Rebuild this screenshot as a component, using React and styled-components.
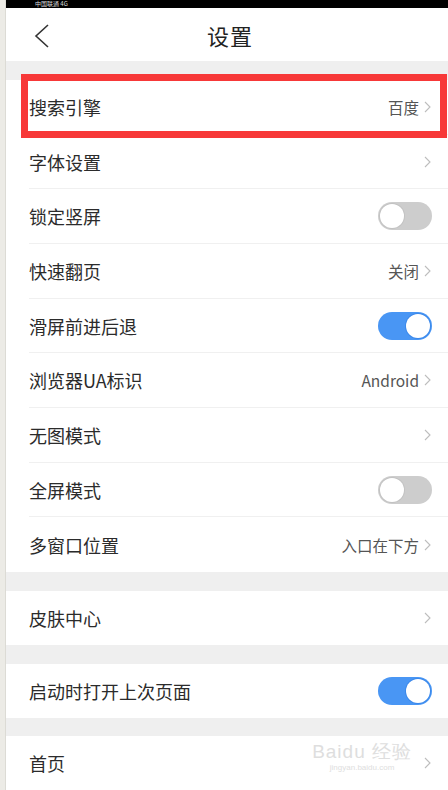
import React, { useState } from "react";
import styled, { createGlobalStyle } from "styled-components";

const GlobalStyle = createGlobalStyle`
  html, body {
    margin: 0;
    padding: 0;
    background: #ffffff;
  }
  body {
    font-family: "Noto Sans CJK SC", "Noto Sans", "Liberation Sans", sans-serif;
    overflow: hidden;
  }
`;

const Page = styled.div`
  display: flex;
  width: 448px;
  height: 790px;
  overflow: hidden;
`;

const LeftStrip = styled.div`
  width: 6px;
  flex-shrink: 0;
  background: #ecebe6;
  border-right: 1px solid #dcdbd5;
  box-sizing: border-box;
`;

const Main = styled.div`
  flex: 1;
  display: flex;
  flex-direction: column;
  background: #efefef;
`;

const StatusBar = styled.div`
  height: 8px;
  background: #000;
  color: #ddd;
  font-size: 6px;
  line-height: 8px;
  padding-left: 29px;
  white-space: nowrap;
`;

const Header = styled.div`
  height: 54px;
  background: #fff;
  display: flex;
  align-items: center;
  justify-content: center;
  padding-left: 6px;
  position: relative;
`;

const BackButton = styled.button`
  position: absolute;
  left: 24px;
  top: 15px;
  width: 24px;
  height: 26px;
  padding: 0;
  border: 0;
  background: none;
  display: flex;
  align-items: center;
  justify-content: center;
`;

const Title = styled.h1`
  margin: 0;
  font-size: 22px;
  font-weight: 400;
  color: #222;
  letter-spacing: 1px;
`;

const Band = styled.div`
  height: ${p => p.$h || 19}px;
  flex-shrink: 0;
`;

const Group = styled.div`
  background: #fff;
  padding-left: 23px;
`;

const Row = styled.div`
  position: relative;
  height: ${p => p.$h || 54}px;
  display: flex;
  align-items: center;
  justify-content: space-between;
  padding-right: 17px;
  box-sizing: border-box;
  border-bottom: ${p => (p.$last ? "none" : "1px solid #f0f0f0")};
`;

const Label = styled.span`
  font-size: 18px;
  color: #2b2b2b;
`;

const Right = styled.div`
  display: flex;
  align-items: center;
  gap: 5px;
`;

const Value = styled.span`
  font-size: 15.5px;
  color: #555;
`;

const Highlight = styled.div`
  position: absolute;
  left: -8px;
  right: 1px;
  top: -6px;
  bottom: -4px;
  border: 7px solid #f73838;
  pointer-events: none;
`;

const Track = styled.button`
  width: 54px;
  height: 28px;
  border-radius: 14px;
  border: 0;
  padding: 0;
  margin-right: -1px;
  background: ${p => (p.$on ? "#4996f4" : "#cdcdcd")};
  position: relative;
  cursor: pointer;
`;

const Knob = styled.span`
  position: absolute;
  top: 2px;
  left: ${p => (p.$on ? "28px" : "2px")};
  width: 24px;
  height: 24px;
  border-radius: 50%;
  background: #fff;
  box-shadow: 0 0 0 1px ${p => (p.$on ? "#3b88ea" : "#c2c2c2")};
`;

const Watermark = styled.div`
  position: absolute;
  right: 36px;
  top: 6px;
  display: flex;
  flex-direction: column;
  align-items: center;
  color: #dedede;
  pointer-events: none;
  line-height: 1;
`;

const WmTop = styled.span`
  font-family: "Liberation Sans", sans-serif;
  font-size: 19px;
  letter-spacing: 1px;
`;

const WmBottom = styled.span`
  font-family: "Liberation Sans", sans-serif;
  font-size: 8px;
  margin-top: 3px;
`;

const Chevron = () => (
  <svg width="7" height="12" viewBox="0 0 7 12">
    <path d="M1 1 L6 6 L1 11" fill="none" stroke="#bdbdbd" strokeWidth="1.1" />
  </svg>
);

const Toggle = ({ initial }) => {
  const [on, setOn] = useState(initial);
  return (
    <Track $on={on} onClick={() => setOn(!on)}>
      <Knob $on={on} />
    </Track>
  );
};

const mainItems = [
  { label: "搜索引擎", value: "百度", type: "link", highlight: true },
  { label: "字体设置", type: "link" },
  { label: "锁定竖屏", type: "toggle", on: false },
  { label: "快速翻页", value: "关闭", type: "link" },
  { label: "滑屏前进后退", type: "toggle", on: true },
  { label: "浏览器UA标识", value: "Android", type: "link" },
  { label: "无图模式", type: "link" },
  { label: "全屏模式", type: "toggle", on: false },
  { label: "多窗口位置", value: "入口在下方", type: "link" }
];

const SettingRow = ({ item, last, h }) => (
  <Row $last={last} $h={h}>
    <Label>{item.label}</Label>
    {item.type === "toggle" ? (
      <Toggle initial={item.on} />
    ) : (
      <Right>
        {item.value ? <Value>{item.value}</Value> : null}
        <Chevron />
      </Right>
    )}
    {item.highlight ? <Highlight /> : null}
    {item.watermark ? (
      <Watermark>
        <WmTop>Baidu 经验</WmTop>
        <WmBottom>jingyan.baidu.com</WmBottom>
      </Watermark>
    ) : null}
  </Row>
);

const App = () => {
  return (
    <>
      <GlobalStyle />
      <Page>
        <LeftStrip />
        <Main>
          <StatusBar>中国联通 4G</StatusBar>
          <Header>
            <BackButton>
              <svg width="16" height="24" viewBox="0 0 16 24">
                <path d="M14 1 L2 12 L14 23" fill="none" stroke="#333" strokeWidth="1.6" />
              </svg>
            </BackButton>
            <Title>设置</Title>
          </Header>
          <Band $h={19} />
          <Group>
            {mainItems.map((item, i) => (
              <SettingRow
                key={item.label}
                item={item}
                h={54.67}
                last={i === mainItems.length - 1}
              />
            ))}
          </Group>
          <Band $h={19} />
          <Group>
            <SettingRow item={{ label: "皮肤中心", type: "link" }} last />
          </Group>
          <Band $h={19} />
          <Group>
            <SettingRow item={{ label: "启动时打开上次页面", type: "toggle", on: true }} last />
          </Group>
          <Band $h={18} />
          <Group>
            <SettingRow item={{ label: "首页", type: "link", watermark: true }} last />
          </Group>
        </Main>
      </Page>
    </>
  );
};

export default App;
